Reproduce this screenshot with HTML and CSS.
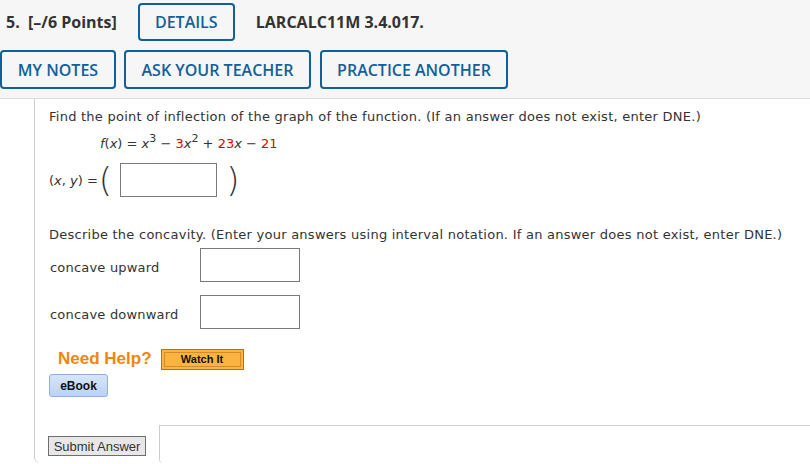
FILE: index.html
```html
<!DOCTYPE html>
<html>
<head>
<meta charset="utf-8">
<link rel="stylesheet" href="styles.css">
</head>
<body>
<div class="header">
  <div class="row row1">
    <span class="qnum">5.&nbsp; [–/6 Points]</span>
    <span class="btn btn-details">DETAILS</span>
    <span class="qid">LARCALC11M 3.4.017.</span>
  </div>
  <div class="row row2">
    <span class="btn btn-notes">MY NOTES</span>
    <span class="btn btn-ask">ASK YOUR TEACHER</span>
    <span class="btn btn-practice">PRACTICE ANOTHER</span>
  </div>
</div>
<div class="main">
  <div class="gutter"></div>
  <div class="panel">
    <p class="line first">Find the point of inflection of the graph of the function. (If an answer does not exist, enter DNE.)</p>
    <p class="line formula"><i>f</i>(<i>x</i>) = <i>x</i><sup>3</sup> − <span class="red">3</span><i>x</i><sup>2</sup> + <span class="red">23</span><i>x</i> − <span class="red">21</span></p>
    <div class="point-row">
      <span class="lbl">(<i>x</i>, <i>y</i>) =</span>
      <span class="paren lp">(</span>
      <span class="box box-point"></span>
      <span class="paren rp">)</span>
    </div>
    <p class="line describe">Describe the concavity. (Enter your answers using interval notation. If an answer does not exist, enter DNE.)</p>
    <div class="answer-row up">
      <span class="alabel">concave upward</span>
      <span class="box box-int"></span>
    </div>
    <div class="answer-row down">
      <span class="alabel">concave downward</span>
      <span class="box box-int"></span>
    </div>
    <div class="help-row">
      <span class="need">Need Help?</span>
      <span class="watch"><span class="watch-inner">Watch It</span></span>
    </div>
    <div class="ebook-row">
      <span class="ebook">eBook</span>
    </div>
    <div class="submit-row">
      <span class="submit">Submit Answer</span>
      <div class="after"></div>
    </div>
  </div>
</div>
</body>
</html>
```

FILE: styles.css
```css
html, body {
  margin: 0;
  padding: 0;
  background: #ffffff;
  width: 810px;
  height: 464px;
  overflow: hidden;
}

.header {
  background: #f6f6f6;
  border-bottom: 1px solid #dcdcdc;
  padding: 3px 0 9px 0;
  font-family: "Open Sans", "Liberation Sans", sans-serif;
}

.row {
  display: flex;
  align-items: center;
}

.row2 {
  margin-top: 9px;
}

.qnum {
  margin-left: 6px;
  font-weight: 700;
  font-size: 16px;
  color: #333333;
  margin-right: 21px;
}

.qid {
  margin-left: 21px;
  font-weight: 700;
  font-size: 16px;
  color: #333333;
}

.btn {
  box-sizing: border-box;
  display: flex;
  align-items: center;
  justify-content: center;
  height: 38px;
  border: 2px solid #12609a;
  border-radius: 4px;
  color: #12609a;
  font-weight: 600;
  font-size: 16px;
}

.btn-details { width: 97px; }
.btn-notes { width: 116px; height: 39px; }
.btn-ask { width: 187px; height: 39px; margin-left: 8px; }
.btn-practice { width: 188px; height: 39px; margin-left: 9px; }

.main {
  display: flex;
  font-family: "DejaVu Sans", Verdana, sans-serif;
  font-size: 13px;
  color: #333333;
}

.gutter {
  width: 34px;
  flex: none;
}

.panel {
  flex: 1;
  border-left: 1px solid #cccccc;
  border-bottom-left-radius: 6px;
  padding: 10px 0 0 14px;
  display: flex;
  flex-direction: column;
}

.line {
  margin: 0;
  line-height: 16px;
  white-space: nowrap;
}

.first, .describe {
  letter-spacing: 0.25px;
}

.formula {
  margin-top: 11px;
  margin-left: 51px;
}

.formula sup {
  font-size: 11px;
  line-height: 0;
  vertical-align: 6px;
}

.red {
  color: #e00000;
}

.point-row {
  display: flex;
  align-items: center;
  margin-top: 11px;
  height: 34px;
}

.paren {
  font-family: "DejaVu Sans", sans-serif;
  font-weight: 200;
  font-size: 34px;
  line-height: 34px;
  color: #333333;
}

.lp { margin-left: 1px; margin-right: 8px; }
.rp { margin-left: 9px; }

.box {
  box-sizing: border-box;
  border: 1px solid #7a7a7a;
  background: #ffffff;
  height: 34px;
  display: block;
}

.box-point { width: 97px; }
.box-int { width: 100px; }

.describe {
  margin-top: 30px;
}

.answer-row {
  display: flex;
  align-items: center;
  height: 34px;
}

.answer-row.up { margin-top: 5px; }
.answer-row.down { margin-top: 13px; }

.alabel {
  width: 150px;
  margin-left: 1px;
  padding-top: 4px;
  letter-spacing: 0.2px;
}

.help-row {
  display: flex;
  align-items: center;
  margin-top: 19px;
  height: 22px;
}

.need {
  font-family: "Liberation Sans", Arial, sans-serif;
  font-weight: 700;
  font-size: 17px;
  color: #f0850f;
  margin-left: 9px;
}

.watch {
  box-sizing: border-box;
  margin-left: 9px;
  width: 83px;
  height: 21px;
  border: 1px solid #b07227;
  background: #fbb43f;
  padding: 2px;
  display: flex;
}

.watch-inner {
  flex: 1;
  border: 1px solid #d58d2c;
  display: flex;
  align-items: center;
  justify-content: center;
  font-family: "Liberation Sans", Arial, sans-serif;
  font-weight: 700;
  font-size: 11px;
  color: #111111;
}

.ebook-row {
  display: flex;
  margin-top: 4px;
}

.ebook {
  box-sizing: border-box;
  width: 59px;
  height: 23px;
  border: 1px solid #8fb0db;
  border-radius: 3px;
  background: linear-gradient(#d6e6fa, #b9d3f1);
  display: flex;
  align-items: center;
  justify-content: center;
  font-family: "Liberation Sans", Arial, sans-serif;
  font-weight: 700;
  font-size: 12px;
  color: #111111;
}

.submit-row {
  display: flex;
  align-items: flex-end;
  margin-top: 28px;
  height: 38px;
}

.submit {
  box-sizing: border-box;
  width: 98px;
  height: 20px;
  border: 1px solid #6e6e6e;
  background: #e7e7e7;
  display: flex;
  align-items: center;
  justify-content: center;
  font-family: "Liberation Sans", Arial, sans-serif;
  font-size: 13px;
  color: #333333;
  margin-left: -1px;
  margin-bottom: 7px;
}

.after {
  flex: 1;
  align-self: stretch;
  margin-left: 13px;
  border-top: 1px solid #cccccc;
  border-left: 1px solid #cccccc;
  border-bottom-left-radius: 4px;
}
```
